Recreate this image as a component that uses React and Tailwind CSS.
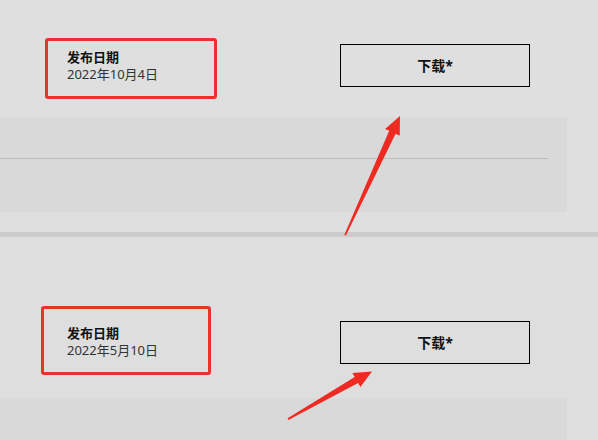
import React from "react";

const font = { fontFamily: "'Noto Sans', 'Noto Sans CJK SC', sans-serif" };

function DateBox({ date, className }) {
  return (
    <div className={`border-[3px] border-[#e5342a] rounded-[3px] ${className}`}>
      <div className="text-[13px] leading-[17px] font-bold text-[#111]">发布日期</div>
      <div className="text-[13px] leading-[17px] text-[#333]">{date}</div>
    </div>
  );
}

function DownloadButton({ className }) {
  return (
    <div
      className={`w-[190px] h-[43px] border border-black flex items-center justify-center text-[14px] font-bold text-[#111] ${className}`}
    >
      下载*
    </div>
  );
}

export default function App() {
  return (
    <div className="relative w-[598px] h-[440px] overflow-hidden bg-[#dedede]" style={font}>
      {/* first release */}
      <section className="h-[232px] bg-[#dfdfdf] flex flex-col">
        <div className="flex items-start pt-[38px]">
          <DateBox date="2022年10月4日" className="ml-[45px] w-[172px] h-[61px] pl-[19px] pt-[8px]" />
          <DownloadButton className="ml-[123px] mt-[6px]" />
        </div>
        <div className="mt-[18px] w-[567px] h-[95px] bg-[#d9d9d9] pt-[41px]">
          <div className="w-[548px] h-px bg-[#bdbdbd]" />
        </div>
      </section>

      <div className="h-[5px] bg-[#cbcbcb]" />

      {/* second release */}
      <section className="flex flex-col">
        <div className="flex items-start pt-[69px]">
          <DateBox date="2022年5月10日" className="ml-[41px] w-[170px] h-[69px] pl-[23px] pt-[16px]" />
          <DownloadButton className="ml-[129px] mt-[15px]" />
        </div>
        <div className="mt-[23px] w-[567px] h-[60px] bg-[#d9d9d9]" />
      </section>

      {/* annotation arrows */}
      <svg className="absolute inset-0 pointer-events-none" width="598" height="440" viewBox="0 0 598 440">
        <polygon
          fill="#ee2a22"
          points="344.3,235 389.2,130.8 385.1,128.9 400,116 399.7,135.7 395.6,133.8 345.9,235.6"
        />
        <polygon
          fill="#ee2a22"
          points="287.6,418.3 354.7,376.9 352.4,372.9 372,371.5 360.4,386.9 358.1,382.9 288.4,419.9"
        />
      </svg>
    </div>
  );
}
